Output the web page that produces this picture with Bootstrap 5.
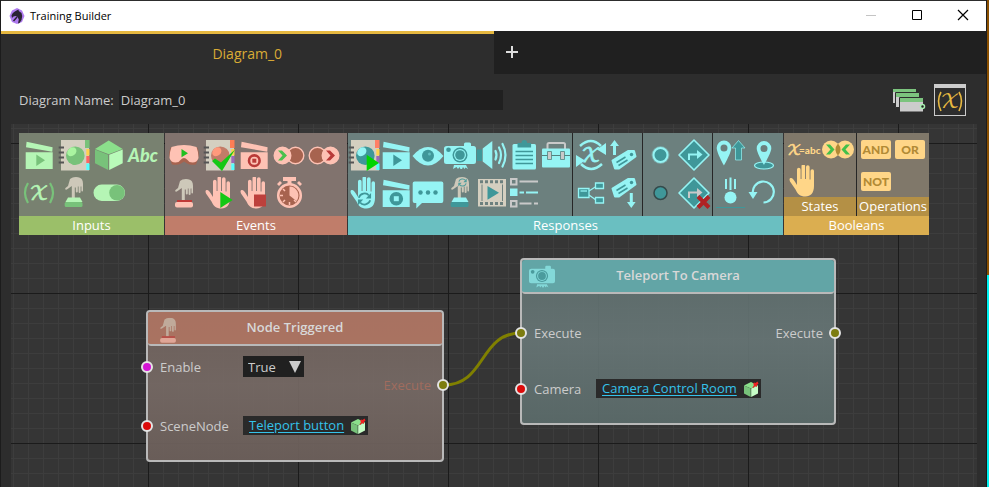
<!DOCTYPE html>
<html lang="en">
<head>
<meta charset="utf-8">
<meta name="viewport" content="width=device-width, initial-scale=1">
<title>Training Builder</title>
<link href="https://cdn.jsdelivr.net/npm/bootstrap@5.3.0/dist/css/bootstrap.min.css" rel="stylesheet">
<style>
  body { font-family: "Open Sans", "Noto Sans", sans-serif; font-size: 13px; line-height: 20px; color: #ccc;
         background: linear-gradient(#8a4f00 0 275px, #00f0f0 275px) right / 2px 100% no-repeat #1c1c1c; }
  button { padding: 0; border: 0; background: none; color: inherit; line-height: 1; }
  svg { display: block; overflow: visible; }
  .app-window { min-height: 100vh; margin: 0 3px 0 1px; padding-top: 1px; background: #2d2d2d; overflow: hidden; }
  .title-strip { height: 30px; background: #fff; color: #000; font-size: 11px; padding-left: 8px; gap: 5px; }
  .title-strip button { width: 46px; height: 30px; }
  .tab-strip { height: 43px; background: #202020; }
  .tab-strip .doc-tab { border-top: 3px solid #e6b840; background: #2d2d2d; color: #d9ab35; font-size: 14px; }
  .tab-strip .add-tab { width: 36px; }
  .name-strip { height: 50px; padding: 2px 20px 0 18px; gap: 5px; }
  .name-strip input { width: 384px; height: 20px; padding: 0 2px; border: 0; background: #202020; color: #ccc; }
  .name-strip .vars { width: 32px; height: 32px; border: 1px solid #ccc; border-top-width: 4px; color: #e6b840; }
  .board { position: relative; margin: 0 9px 0 10px; padding: 9px 8px; min-height: 363px; background-color: #353535;
    background-image: linear-gradient(#1b1b1b 1px, transparent 1px), linear-gradient(90deg, #1b1b1b 1px, transparent 1px),
      linear-gradient(#3d3d3d 1px, transparent 1px), linear-gradient(90deg, #3d3d3d 1px, transparent 1px);
    background-size: 150px 150px, 150px 150px, 15px 15px, 15px 15px;
    background-position: 137px 19px; }
  .palette { gap: 1px; width: max-content; color: #fff; }
  .palette .group { background: var(--body); color: var(--lt); }
  .palette .group-name { height: 19px; line-height: 19px; text-align: center; color: #fff; background: var(--bar); }
  .palette .sub-name { height: 19px; line-height: 19px; text-align: center; color: #fff; background: #b49045; }
  .palette .section + .section { border-left: 1px solid #262626; }
  .tools { display: grid; justify-items: center; align-items: center; grid-auto-rows: 38px; padding: 3px 2px 4px 1px; }
  .tools svg, .node-icon { width: 32px; height: 32px; }
  .c4 { grid-template-columns: repeat(4, 35px); padding-left: 2px; padding-right: 3px; }
  .c5 { grid-template-columns: repeat(5, 35px); padding-left: 1px; padding-right: 6px; }
  .c7 { grid-template-columns: repeat(7, 32px); padding-left: 0; padding-right: 0; }
  .c2 { grid-template-columns: repeat(2, 33px); }
  .c2:last-child { padding-right: 3px; }
  .c2w { grid-template-columns: repeat(2, 35px); grid-auto-rows: 32px; padding: 0 1px; }
  .green { --lt: #b5f5b5; --dk: #78c27a; --body: #788170; --bar: #9bbf69; }
  .red { --lt: #fec2b4; --dk: #a7634f; --body: #81736e; --bar: #c07d6a; }
  .teal { --lt: #95f4f4; --dk: #3f9799; --body: #6c807e; --bar: #6abfc1; }
  .gold { --lt: #ffd688; --dk: #b28a35; --body: #80786a; --bar: #dbae50; }
  .wire { position: absolute; left: 0; top: 0; width: 100%; height: 100%; pointer-events: none; }
  .node { position: absolute; border: 2px solid #b9b9b9; border-radius: 4px; white-space: nowrap; }
  .node header { height: 34px; padding-bottom: 2px; border-bottom: 2px solid #b9b9b9; border-radius: 3px; font-weight: 600; color: #d8d8d8; background: var(--head); }
  .node header .node-icon { position: absolute; left: 6px; top: 1px; color: var(--lt); opacity: .65; }
  .node-trigger { left: 135px; top: 186px; width: 298px; height: 152px; --head: rgba(174,116,98,.92); background: linear-gradient(rgba(113,99,94,.93), rgba(120,107,102,.9) 50%, rgba(109,96,91,.93)); }
  .node-camera { left: 509px; top: 134px; width: 316px; height: 167px; --head: rgba(99,170,171,.92); background: linear-gradient(rgba(94,110,109,.93), rgba(104,119,119,.9) 50%, rgba(91,107,106,.93)); }
  .pins { display: flex; flex-direction: column; }
  .node-trigger .ins { padding-top: 10px; gap: 38px; }
  .node-trigger .outs { padding-top: 28px; }
  .node-trigger .pin-name { width: 83px; }
  .node-camera .ins { padding-top: 28px; gap: 35px; }
  .node-camera .outs { padding-top: 28px; }
  .node-camera .pin-name { width: 62px; }
  .pin-name { flex: none; }
  .pin { position: relative; display: flex; align-items: center; height: 21px; }
  .ins .pin { padding-left: 12px; }
  .outs .pin { padding-right: 11px; }
  .pin::before { content: ""; position: absolute; width: 12px; height: 12px; border: 2px solid #e4e4e4; border-radius: 50%; background: var(--dot); }
  .ins .pin::before { left: -7px; }
  .outs .pin::before { right: -7px; }
  .dot-bool { --dot: #d414d4; } .dot-ref { --dot: #dc0a0a; } .dot-run { --dot: #7c7c10; }
  .faded { color: #a06c5e; }
  .field { background: #202020; position: relative; }
  .field select { appearance: none; border: 0; background: transparent; color: #ccc; width: 61px; height: 21px; padding: 0 5px; }
  .field svg { position: absolute; right: 3px; top: 5px; pointer-events: none; }
  .link-field { height: 19px; padding: 0 2px 0 6px; gap: 6px; background: #2a2a2a; }
  .link-field a { color: #35c2ea; text-underline-offset: 2px; line-height: 19px; }
  .link-field svg { width: 16px; height: 16px; }
  .glyph { font-family: "Lato", sans-serif; font-weight: 900; }
  .script-x { font-family: "DejaVu Math TeX Gyre", "DejaVu Serif", serif; }
</style>
<script src="https://cdn.jsdelivr.net/npm/bootstrap@5.3.0/dist/js/bootstrap.bundle.min.js"></script>
</head>
<body>
<svg width="0" height="0" class="position-absolute" aria-hidden="true">
  <symbol id="clap" viewBox="0 0 32 32"><path fill="currentColor" d="M3.6 2.7 29.6 8.3 29.3 12.7 3 8.3zM2.7 13.3h27V30h-27z"/></symbol>
  <symbol id="clap-play" viewBox="0 0 32 32"><use href="#clap"/><path fill="var(--dk)" d="M13.3 15.6 22 21.3 13.3 27z"/></symbol>
  <symbol id="book" viewBox="0 0 32 32"><path fill="#d4cfc0" d="M3 1h28v30.5H3z"/><path fill="var(--tab)" d="M27 1h4.500v8H27z"/><path fill="#ffd24d" d="M28.300 10h3.200v6.500h-3.200z"/><path fill="var(--tab2)" d="M28.300 17h3.200v7h-3.200z"/><path fill="#5ff" d="M28.300 24.500h3.200v6.500h-3.200z"/><circle cx="17.300" cy="16.700" r="9.300" fill="var(--ball)"/><ellipse cx="13.800" cy="12.800" rx="5" ry="4" transform="rotate(-40 13.800 12.800)" fill="var(--shine)"/><path stroke="#555" stroke-width="2" d="M.7 8.500H6M.7 13.500H6M.7 18.500H6M.7 23.500H6"/></symbol>
  <symbol id="cube" viewBox="0 0 32 32"><path fill="#8be08b" d="M15.700 1.500 29.700 10 15.700 15.300 2 10z"/><path fill="#78c27a" d="M2 10.500 15.200 15.800V31L2 24.300z"/><path fill="#b9fbb9" d="M29.700 10.500 16.200 15.800V31l13.500-6.700z"/></symbol>
  <symbol id="point" viewBox="0 0 32 32"><path fill="#cdc8b9" d="M12 2Q14 0 18 0q4.500 0 6 2.500 1 1.500 1 4.500v6.500q0 1-.8 1t-.8-1V9.500h-.8v5.500q0 1-1 1t-1-1V9.500h-.8v5q0 1-1 1t-1-1V10.500h-1V22h-3V9l-3.500 2.500q-1.500 1.500-2.800 1-.8-.5 0-1.500L10 9z"/></symbol>
  <symbol id="press-green" viewBox="0 0 32 32"><use href="#point"/><path fill="currentColor" d="M10 20.500h12l2.500 4.500H7.500z"/><rect x="6.700" y="25" width="17.800" height="5" rx="1.500" fill="var(--dk)"/></symbol>
  <symbol id="press-red" viewBox="0 0 32 32"><use href="#point" x="0" y="2"/><path fill="#c03a38" d="M9 23h15v2H9z"/><rect x="7" y="25" width="18" height="5.500" rx="2" fill="currentColor"/></symbol>
  <symbol id="hand" viewBox="0 0 32 32"><path fill="currentColor" d="M3.500 13c1.500-.5 3 1 4 3l2.500 4V4.500a1.800 1.800 0 0 1 3.600 0V14h.9V1.200a1.800 1.800 0 0 1 3.600 0V14h.9V2a1.800 1.800 0 0 1 3.600 0v12.500h.9V6a1.700 1.700 0 0 1 3.500 0v15c0 7-3.500 10.500-8.500 10.500-5.500 0-8-2.500-10-7L3 16.500c-.8-1.800-.6-3 .5-3.500z"/></symbol>
  <symbol id="cycle" viewBox="0 0 32 32"><g fill="none" stroke="var(--arrow)" stroke-width="4"><path d="M3 13C6 3 20 0 26 8M29 19C26 29 12 32 6 24"/></g><path fill="var(--arrow)" d="M31 2v13H19zM1 30V17h12z"/></symbol>
  <symbol id="cam" viewBox="0 0 32 32"><path fill="currentColor" d="M3 7h17V5q0-1.500 1.500-1.500h4Q27 3.500 27 5v2h2.500Q32 7 32 9.500v13q0 2.500-2.500 2.500h-27Q0 25 0 22.500v-13Q0 7 3 7zM10 26h12l2 4-2.500-1.500-1 1.500-1.500-2-1 2h-1.500l-1-2-1.500 2-1.500-2L9 30z"/><circle cx="4.500" cy="10.800" r="2.300" fill="var(--dk)"/><circle cx="16" cy="16" r="7.500" fill="var(--dk)"/><circle cx="16" cy="16" r="6" fill="currentColor"/><circle cx="16" cy="16" r="4.800" fill="var(--dk)"/></symbol>
  <symbol id="tag" viewBox="0 0 32 32"><path fill="currentColor" stroke="currentColor" stroke-width="2" stroke-linejoin="round" d="M4.500 11.500 20 2h6l1.500 5.500L11 19.500H7z"/><circle cx="23.500" cy="5.500" r="1.700" fill="var(--dk)"/><path stroke="var(--dk)" stroke-width="1.500" d="m8.500 13.500 9-5.500M10.500 16.500l9-5.500"/></symbol>
  <symbol id="diamond" viewBox="0 0 32 32"><path fill="var(--dk)" stroke="currentColor" stroke-width="1.600" stroke-linejoin="round" d="M16 1 31 16 16 31 1 16z"/></symbol>
  <symbol id="pinned-cube" viewBox="0 0 16 16"><path fill="#8be08b" d="m8 1 7 3.500-7 3-7-3z"/><path fill="#78c27a" d="m1 4.500 6.700 3V16L1 12.500z"/><path fill="#c6fdc6" d="M15 4.500 8.200 7.500V16l6.800-3.500z"/><path fill="#e22" d="m11 1.500 1.500.5 2-1.500 1 2-1.500 1.500V6l-1.500-1-2.500 2-.5-.5 1.500-2.500-.8-1z"/></symbol>
</svg>

<div class="app-window d-flex flex-column">
  <div class="title-strip d-flex align-items-center">
    <svg width="16" height="16" viewBox="0 0 16 16"><path fill="#b07cf0" d="M8 0l5 2.500L15.500 8 13 14l-5 2-5-2L.5 8 3 2.500z"/><path fill="#2b2433" d="M2.500 7.500C3.500 4.500 6 3 9.500 1.500l.3 1.500 2.700 2 .7 3-.7 4-2 3-1.500.5.800-4-1.300-2.500-2-1-2 .5-1.500 1.500z"/><path stroke="#2b2433" stroke-width="1.500" d="m4.500 13 3.500-4"/></svg>
    <span class="me-auto">Training Builder</span>
    <div class="d-flex">
      <button type="button" aria-label="Minimize"><svg width="46" height="30"><path stroke="#c4c4c4" d="M18 14.500h10"/></svg></button>
      <button type="button" aria-label="Maximize"><svg width="46" height="30"><path fill="none" stroke="#000" d="M18.500 9.500h9v9h-9z"/></svg></button>
      <button type="button" aria-label="Close"><svg width="46" height="30"><path stroke="#000" stroke-width="1.200" d="m18 9 10 10M28 9 18 19"/></svg></button>
    </div>
  </div>

  <div class="tab-strip d-flex">
    <button type="button" class="doc-tab w-50">Diagram_0</button>
    <button type="button" class="add-tab" aria-label="Add diagram"><svg width="36" height="40"><path stroke="#ddd" stroke-width="2" d="M12 19h12M18 13v12"/></svg></button>
  </div>

  <div class="name-strip d-flex align-items-center">
    <label for="diagram-name">Diagram Name:</label>
    <input id="diagram-name" type="text" value="Diagram_0">
    <div class="d-flex align-items-center gap-2 ms-auto">
      <button type="button" aria-label="Layers"><svg width="34" height="24"><g fill="#ccc"><path d="M1 1h23v14H1z"/><path stroke="#2d2d2d" d="M3.500 4.500h24v15h-24z"/><path stroke="#2d2d2d" d="M7.500 9.500h24v14.500h-24z"/></g><path fill="#7cc47e" d="M1 1h23v3H1zM4 5h23v4H4zM8 10h23v4H8z"/><circle cx="30.500" cy="18.500" r="2" fill="#222" stroke="#a8f0b0" stroke-width="1.500"/></svg></button>
      <button type="button" class="vars" aria-label="Variables"><svg width="30" height="27" viewBox="0 0 30 27" fill="currentColor" text-anchor="middle"><text x="15" y="20" font-size="20" class="script-x">𝒳</text><path fill="none" stroke="currentColor" stroke-width="1.600" d="M6 4q-5 9 0 19M24 4q5 9 0 19"/></svg></button>
    </div>
  </div>

  <main class="board flex-grow-1">
    <div class="palette d-flex">
      <section class="group green">
        <div class="tools c4">
          <button type="button" aria-label="Clip"><svg><use href="#clap-play"/></svg></button>
          <button type="button" aria-label="Material"><svg style="--tab:#78c27a;--tab2:#ff6464;--ball:#78c27a;--shine:#a9f5a0"><use href="#book"/></svg></button>
          <button type="button" aria-label="Object"><svg><use href="#cube"/></svg></button>
          <button type="button" aria-label="Text"><svg viewBox="0 0 32 32"><text x="15" y="23" text-anchor="middle" fill="currentColor" class="glyph" font-style="italic" font-size="18">Abc</text></svg></button>
          <button type="button" aria-label="Variable"><svg viewBox="0 0 32 32"><text x="16" y="23" text-anchor="middle" fill="currentColor" stroke="currentColor" stroke-width=".6" font-size="20" class="script-x">𝒳</text><path fill="none" stroke="var(--dk)" stroke-width="2.200" d="M5 6q-6 9.500 0 20M27 6q6 9.500 0 20"/></svg></button>
          <button type="button" aria-label="Press"><svg><use href="#press-green"/></svg></button>
          <button type="button" aria-label="Toggle"><svg viewBox="0 0 32 32"><rect x=".5" y="7.500" width="31.500" height="16.500" rx="8.200" fill="currentColor"/><circle cx="24" cy="15.700" r="7.800" fill="var(--dk)"/></svg></button>
        </div>
        <div class="group-name">Inputs</div>
      </section>

      <section class="group red">
        <div class="tools c5">
          <button type="button" aria-label="Headset"><svg viewBox="0 0 32 32"><path fill="var(--dk)" d="M3 8Q-1 15 4 25.500q6 1 9-1l3-2 3 2q3 2 9 1 5-10.500 1-17.500z"/><path fill="currentColor" d="M3.500 8Q16 4 28.500 8q2 5 2 11-1.500 4.500-6 4.500-3.500 0-5-2.500-3.500-4-7 0-1.500 2.500-5 2.500-4.500 0-6-4.500 0-6 2-11z"/><path fill="#1fc01f" d="M13.500 10 20 14.300l-6.500 4z"/></svg></button>
          <button type="button" aria-label="Material changed"><svg viewBox="0 0 32 32" style="--tab:#ff7d55;--tab2:#9a6ab8;--ball:#c27c68;--shine:#ff9a7c"><use href="#book"/><path fill="#15c815" d="m9 22 3-2.500 6 4L32 10.500 19 32z"/></svg></button>
          <button type="button" aria-label="Clip stopped"><svg viewBox="0 0 32 32"><use href="#clap"/><circle cx="16.300" cy="21.700" r="5.300" fill="none" stroke="#b93a38" stroke-width="2.600"/><path fill="#b93a38" d="M14.300 19.700h4v4h-4z"/></svg></button>
          <button type="button" aria-label="Enter"><svg viewBox="0 0 32 32"><g stroke="currentColor" stroke-width="1.400"><circle cx="22.500" cy="16.500" r="8.300" fill="var(--dk)"/><circle cx="9.500" cy="16.500" r="8.300" fill="currentColor"/></g><path fill="#4cc04c" d="M5 11.500h4l5 5-5 5H5l4.500-5z"/></svg></button>
          <button type="button" aria-label="Exit"><svg viewBox="0 0 32 32"><g stroke="currentColor" stroke-width="1.400"><circle cx="9.500" cy="16.500" r="8.300" fill="var(--dk)"/><circle cx="22.500" cy="16.500" r="8.300" fill="currentColor"/></g><path fill="#b93a38" d="M18 11.500h4l5 5-5 5h-4l4.500-5z"/></svg></button>
          <button type="button" aria-label="Node triggered"><svg><use href="#press-red"/></svg></button>
          <button type="button" aria-label="Grab start"><svg viewBox="0 0 32 32"><use href="#hand"/><path fill="#15c815" d="M17.300 15 29.700 23l-12.400 8z"/></svg></button>
          <button type="button" aria-label="Grab stop"><svg viewBox="0 0 32 32"><use href="#hand"/><path fill="#bd403c" d="M16 17.500h12v12H16z"/></svg></button>
          <button type="button" aria-label="Timer"><svg viewBox="0 0 32 32"><path fill="currentColor" d="M10 0h13v4h-4.500v3h-4V4H10zM4 7l3-3 2 2-3 3zM29 7l-3-3-2 2 3 3z"/><circle cx="16.500" cy="18.500" r="11.300" fill="var(--dk)" stroke="currentColor" stroke-width="2.500"/><path fill="currentColor" d="M16.500 18.500V9.500a9 9 0 0 1 7 14.500z"/><path stroke="currentColor" stroke-width="1.500" d="M16.500 25v3M7 18.500h3M10 12l2 2M10 25l2-2M23 25l-2-2"/></svg></button>
        </div>
        <div class="group-name">Events</div>
      </section>

      <section class="group teal">
        <div class="d-flex">
          <div class="section tools c7">
            <button type="button" aria-label="Set material"><svg viewBox="0 0 32 32" style="--tab:#ff8066;--tab2:#9a6ab8;--ball:#3f9799;--shine:#95f4f4"><use href="#book"/><path fill="#00d400" d="M18.700 15.700 31 24l-12.300 8z"/></svg></button>
            <button type="button" aria-label="Play clip"><svg><use href="#clap-play"/></svg></button>
            <button type="button" aria-label="Visibility"><svg viewBox="0 0 32 32"><path fill="currentColor" d="M.5 17Q8 8 16 8t15.500 9Q24 26.500 16 26.500T.5 17z"/><circle cx="16" cy="16.800" r="6" fill="var(--dk)"/><circle cx="17.500" cy="15" r="1.500" fill="currentColor" opacity=".4"/></svg></button>
            <button type="button" aria-label="Teleport to camera"><svg><use href="#cam"/></svg></button>
            <button type="button" aria-label="Play sound"><svg viewBox="0 0 32 32"><path fill="var(--dk)" d="M.7 10.500H6v11.500H.7z"/><path fill="currentColor" d="M6.700 9.500 16.300 2v28l-9.600-7.500z"/><path fill="none" stroke="currentColor" stroke-width="2.200" stroke-linecap="round" d="M19.500 12q2 4.200 0 8.500M23 8.500q4 7.500 0 15.500M26.500 5q6 11 0 22.500"/></svg></button>
            <button type="button" aria-label="Clipboard"><svg viewBox="0 0 32 32"><rect x="4.500" y="5" width="23.500" height="25.500" rx="1.500" fill="currentColor"/><path fill="var(--dk)" d="M9.500 4h4q0-3 2.800-3t2.800 3h4v4.500H9.500z"/><path stroke="var(--dk)" stroke-width="1.500" d="M7.500 12.500H25M7.500 16.500H25M7.500 20.500H25M7.500 24.500H25"/></svg></button>
            <button type="button" aria-label="Toolbox"><svg viewBox="0 0 32 32"><path fill="none" stroke="#c9c9c9" stroke-width="2" d="M7.500 10V5.500q0-1.500 1.500-1.500h14.500q1.500 0 1.500 1.500V10"/><rect x="2" y="9.500" width="28" height="19" rx="1" fill="currentColor"/><path stroke="#53817f" d="M2 16.500h28"/><path fill="#c9c9c9" stroke="#53817f" stroke-width=".8" d="M7.500 12.500h4v8h-4zM20.500 12.500h4v8h-4z"/></svg></button>
            <button type="button" aria-label="Reset grab"><svg viewBox="0 0 32 32" style="--arrow:#3f9799"><use href="#hand"/><use href="#cycle" x="9" y="15" width="15" height="14"/></svg></button>
            <button type="button" aria-label="Stop clip"><svg viewBox="0 0 32 32"><use href="#clap"/><circle cx="16.300" cy="21.700" r="6.800" fill="var(--dk)"/><path fill="currentColor" d="M13.800 19.200h5v5h-5z"/></svg></button>
            <button type="button" aria-label="Message"><svg viewBox="0 0 32 32"><path fill="currentColor" d="M2.500 4.500h27q1.800 0 1.800 1.800V24q0 2-1.800 2H10l-5.700 5.500V26H2.500Q.7 26 .7 24V6.300q0-1.800 1.800-1.800z"/><g fill="var(--dk)"><circle cx="8.500" cy="15.500" r="2.200"/><circle cx="16" cy="15.500" r="2.200"/><circle cx="23.500" cy="15.500" r="2.200"/></g></svg></button>
            <button type="button" aria-label="Reset press"><svg viewBox="0 0 32 32" style="--arrow:#4f9d9d"><use href="#point"/><use href="#cycle" x="14" y="1" width="9" height="9"/><path fill="currentColor" d="M10 20.500h12l2.500 4.500H7.500z"/><rect x="6.700" y="25" width="17.800" height="5" rx="1.500" fill="var(--dk)"/></svg></button>
            <button type="button" aria-label="Play video"><svg viewBox="0 0 32 32"><path fill="#d4cfc0" d="M2 2h28v27.500H2z"/><path stroke="#6c807e" stroke-width="3" stroke-dasharray="3 2" d="M4 4.800h25M4 26.500h25"/><path stroke="#6c807e" d="M6 7.500v16.500M26.500 7.500v16.500"/><path fill="var(--dk)" d="M11.500 9 23 15.700l-11.500 7z"/></svg></button>
            <button type="button" aria-label="Checklist"><svg viewBox="0 0 32 32"><path fill="none" stroke="#c9c9c9" stroke-width="2" d="M3 2h5.500v5.500H3zM3 24h5.500v5.500H3z"/><path fill="currentColor" d="M2 11.500h7.500v7.500H2z"/><path stroke="#c9c9c9" stroke-width="2.200" d="M11.500 4.500H30M11.500 26.500h12M26 26.500h4"/><path stroke="currentColor" stroke-width="2.200" d="M11.500 15.500h4.500M18 15.500h12"/></svg></button>
          </div>
          <div class="section tools c2">
            <button type="button" aria-label="Update variable"><svg viewBox="0 0 32 32"><path fill="none" stroke="currentColor" stroke-width="2.500" d="M5 7Q16-3 26 7M27 25Q16 35 6 25"/><path fill="currentColor" d="M31 4v12l-9-5.500zM1 28V16l9 5.500z"/><text x="16" y="23" text-anchor="middle" fill="currentColor" stroke="currentColor" stroke-width=".8" font-size="20" class="script-x">𝒳</text></svg></button>
            <button type="button" aria-label="Attach tag"><svg viewBox="0 0 32 32"><use href="#tag" y="10"/><path fill="currentColor" d="M6.500 1 11 7H8v9H5V7H2z"/></svg></button>
            <button type="button" aria-label="Branch"><svg viewBox="0 0 32 32"><path fill="none" stroke="currentColor" stroke-width="1.300" d="m14 14 7-4.500M14 18l7 5"/><path fill="var(--dk)" stroke="currentColor" stroke-width="1.300" d="M3.500 11.500h10.500v9H3.500zM20.500 6h8v5.500h-8zM20.500 20.500h8V26h-8z"/><path stroke="currentColor" stroke-width="1.300" d="M5.500 14H12"/></svg></button>
            <button type="button" aria-label="Detach tag"><svg viewBox="0 0 32 32"><use href="#tag"/><path fill="currentColor" d="M23.300 31 19 25h2.800v-9h3v9h2.800z"/></svg></button>
          </div>
          <div class="section tools c2">
            <button type="button" aria-label="Highlight on"><svg viewBox="0 0 32 32"><circle cx="15.500" cy="16" r="9" fill="currentColor" opacity=".35"/><circle cx="15.500" cy="16" r="7" fill="var(--dk)" stroke="currentColor" stroke-width="2"/></svg></button>
            <button type="button" aria-label="Go to step"><svg viewBox="0 0 32 32"><use href="#diamond"/><path fill="none" stroke="currentColor" stroke-width="2" d="M11 21v-5.500h9"/><path fill="currentColor" d="m19 11 5.500 4.500L19 20z"/></svg></button>
            <button type="button" aria-label="Highlight off"><svg viewBox="0 0 32 32"><circle cx="15.500" cy="16" r="6.500" fill="var(--dk)" stroke="#344a4b" stroke-width="1.500"/></svg></button>
            <button type="button" aria-label="Cancel step"><svg viewBox="0 0 32 32"><use href="#diamond"/><path fill="none" stroke="#c9c9c9" stroke-width="2" d="M11 21v-5.500h9"/><path fill="#c9c9c9" d="m19 11 5.500 4.500L19 20z"/><path stroke="#b02224" stroke-width="4" d="m20 19.500 11 11M31 19.500l-11 11"/></svg></button>
          </div>
          <div class="section tools c2">
            <button type="button" aria-label="Raise marker"><svg viewBox="0 0 32 32"><path fill="currentColor" fill-rule="evenodd" d="M9 1.500a7.300 7.300 0 0 1 7.300 7.300C16.300 14 9 26.500 9 26.500S1.700 14 1.700 8.800A7.300 7.300 0 0 1 9 1.500zm0 4a3.500 3.500 0 1 0 0 7 3.500 3.500 0 0 0 0-7z"/><path fill="var(--dk)" stroke="currentColor" stroke-width=".7" d="m23.500 1.500 6.500 7.500h-3.500v12h-6V9H17z"/></svg></button>
            <button type="button" aria-label="Move to marker"><svg viewBox="0 0 32 32"><ellipse cx="16" cy="26.500" rx="9.500" ry="3.500" fill="var(--dk)" stroke="currentColor" stroke-width="1.200"/><path fill="currentColor" fill-rule="evenodd" d="M16 2a7.300 7.300 0 0 1 7.300 7.300C23.300 14 16 26 16 26S8.700 14 8.700 9.300A7.300 7.300 0 0 1 16 2zm0 4a3.500 3.500 0 1 0 0 7 3.500 3.500 0 0 0 0-7z"/></svg></button>
            <button type="button" aria-label="Drop"><svg viewBox="0 0 32 32"><path stroke="currentColor" stroke-width="2" d="M11 2v10M15.500 .5V13M20 2v10"/><circle cx="15.500" cy="20.500" r="6" fill="currentColor"/><path stroke="var(--dk)" d="M1 30.500h29"/></svg></button>
            <button type="button" aria-label="Undo"><svg viewBox="0 0 32 32"><path fill="none" stroke="currentColor" stroke-width="2.200" d="M5 17A10.500 10.500 0 1 1 15.500 25.500"/><path fill="currentColor" d="M.5 15h9L5 22z"/></svg></button>
          </div>
        </div>
        <div class="group-name">Responses</div>
      </section>

      <section class="group gold">
        <div class="d-flex">
          <div class="section">
            <div class="tools c2w">
              <button type="button" aria-label="Variable equals"><svg viewBox="0 0 32 32" fill="currentColor"><text x="0" y="22" font-size="15" stroke="currentColor" stroke-width=".6" class="script-x">𝒳</text><text x="12" y="21" font-size="10" class="glyph">=abc</text></svg></button>
              <button type="button" aria-label="Overlap"><svg viewBox="0 0 32 32"><circle cx="9" cy="16.500" r="9" fill="currentColor"/><circle cx="23" cy="16.500" r="9" fill="currentColor"/><path fill="var(--dk)" d="M16 10.500q5 6 0 12-5-6 0-12z"/><path fill="#43c04a" d="M4 11.500h4l4.500 5-4.500 5H4l4.500-5zM28 11.500h-4l-4.500 5 4.500 5h4l-4.500-5z"/></svg></button>
              <button type="button" aria-label="Is grabbed"><svg><use href="#hand"/></svg></button>
            </div>
            <div class="sub-name">States</div>
          </div>
          <div class="section">
            <div class="tools c2w">
              <button type="button" aria-label="And"><svg viewBox="0 0 32 32"><rect x="1" y="7" width="30" height="19" rx="2" fill="currentColor"/><text x="16" y="21" text-anchor="middle" fill="var(--dk)" font-size="12" class="glyph">AND</text></svg></button>
              <button type="button" aria-label="Or"><svg viewBox="0 0 32 32"><rect x="0" y="7" width="30" height="19" rx="2" fill="currentColor"/><text x="15" y="21" text-anchor="middle" fill="var(--dk)" font-size="12" class="glyph">OR</text></svg></button>
              <button type="button" aria-label="Not"><svg viewBox="0 0 32 32"><rect x="1" y="7" width="30" height="19" rx="2" fill="currentColor"/><text x="16" y="21" text-anchor="middle" fill="var(--dk)" font-size="12" class="glyph">NOT</text></svg></button>
            </div>
            <div class="sub-name">Operations</div>
          </div>
        </div>
        <div class="group-name">Booleans</div>
      </section>
    </div>

    <svg class="wire" aria-hidden="true"><path fill="none" stroke="#808000" stroke-width="3" d="M433 261C475 261 468 209 510 209"/></svg>

    <article class="node node-trigger red">
      <header class="d-flex align-items-center justify-content-center"><svg class="node-icon"><use href="#press-red" x="0" y="3" width="28" height="28"/></svg>Node Triggered</header>
      <div class="d-flex justify-content-between">
        <div class="pins ins">
          <div class="pin dot-bool"><label class="pin-name" for="enable">Enable</label>
            <div class="field"><select id="enable"><option>True</option><option>False</option></select><svg width="12" height="12"><path fill="#ccc" d="M0 0h12L6 12z"/></svg></div></div>
          <div class="pin dot-ref"><span class="pin-name">SceneNode</span>
            <div class="link-field d-flex align-items-center"><a href="#">Teleport button</a><svg><use href="#pinned-cube"/></svg></div></div>
        </div>
        <div class="pins outs"><div class="pin dot-run faded">Execute</div></div>
      </div>
    </article>

    <article class="node node-camera teal">
      <header class="d-flex align-items-center justify-content-center"><svg class="node-icon"><use href="#cam" x="1" y="2" width="26" height="26"/></svg>Teleport To Camera</header>
      <div class="d-flex justify-content-between">
        <div class="pins ins">
          <div class="pin dot-run"><span class="pin-name">Execute</span></div>
          <div class="pin dot-ref"><span class="pin-name">Camera</span>
            <div class="link-field d-flex align-items-center"><a href="#">Camera Control Room</a><svg><use href="#pinned-cube"/></svg></div></div>
        </div>
        <div class="pins outs"><div class="pin dot-run">Execute</div></div>
      </div>
    </article>
  </main>
</div>
</body>
</html>
